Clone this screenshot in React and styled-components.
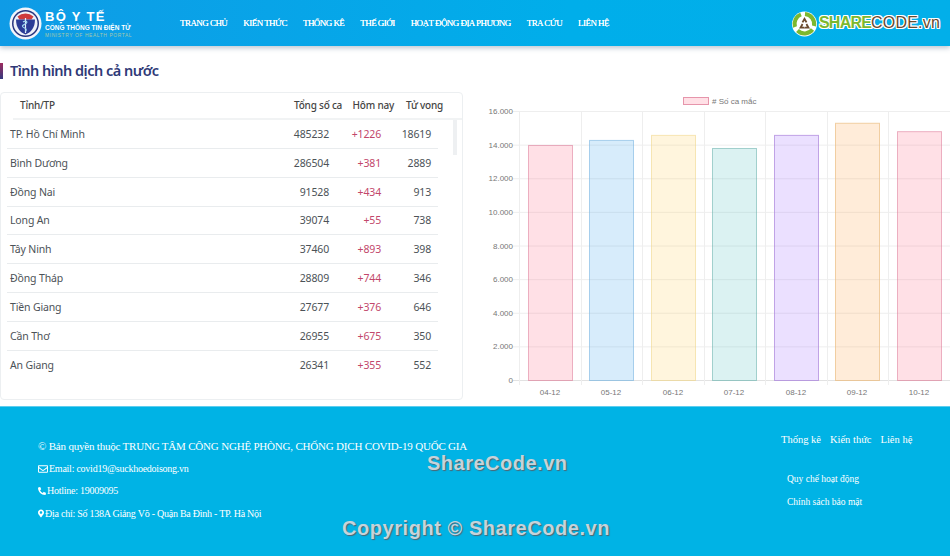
import styled, { createGlobalStyle } from 'styled-components'
import { FaRegEnvelope, FaPhoneAlt, FaMapMarkerAlt } from 'react-icons/fa'

const GlobalStyle = createGlobalStyle`
  html, body {
    margin: 0;
    padding: 0;
    background: #fff;
  }
  #root {
    width: 950px;
    height: 556px;
    overflow: hidden;
  }
`

const Page = styled.div`
  display: flex;
  flex-direction: column;
  width: 950px;
  height: 556px;
  font-family: "Noto Sans", sans-serif;
`

const Header = styled.header`
  display: flex;
  align-items: center;
  flex: 0 0 46px;
  background: linear-gradient(90deg, #0f9be6, #00aeea 60%, #02afe9);
  box-shadow: 0 2px 5px rgba(60, 90, 120, .35);
  position: relative;
  z-index: 1;
`

const Brand = styled.div`
  display: flex;
  align-items: center;
  gap: 3px;
  width: 180px;
  padding-left: 9px;
  box-sizing: border-box;
`

const BrandText = styled.div`
  display: flex;
  flex-direction: column;
  margin-top: 1px;
  font-family: "Liberation Sans", sans-serif;
  font-weight: 700;
  color: #fff;
`

const BrandTitle = styled.span`
  font-size: 13px;
  line-height: 15px;
  letter-spacing: 1.3px;
`

const BrandSub = styled.span`
  font-size: 6.5px;
  line-height: 8px;
  white-space: nowrap;
`

const BrandEn = styled.span`
  font-size: 4.9px;
  line-height: 7px;
  font-weight: 400;
  letter-spacing: .6px;
  color: #a7c9a8;
  white-space: nowrap;
`

const Nav = styled.nav`
  display: flex;
  gap: 16px;
  font-family: "Liberation Serif", serif;
  font-size: 9px;
  color: #fff;
`

const NavLink = styled.a`
  white-space: nowrap;
  letter-spacing: -.55px;
  text-shadow: 0 0 .6px #fff;
`

const ShareLogo = styled.div`
  display: flex;
  align-items: center;
  gap: 0;
  margin-left: auto;
  margin-right: 10px;
  font-family: "Liberation Sans", sans-serif;
  font-size: 16px;
  text-shadow: -1px 0 #fff, 1px 0 #fff, 0 -1px #fff, 0 1px #fff, 1px 1px #fff, -1px -1px #fff, 1px -1px #fff, -1px 1px #fff;
`

const ShareWord = styled.span`
  color: #7cb82f;
  font-weight: 700;
  letter-spacing: -.8px;
`

const CodeWord = styled.span`
  color: #6b4a2e;
  letter-spacing: .2px;
`

const Main = styled.main`
  flex: 1;
  display: flex;
  flex-direction: column;
  min-height: 0;
`

const Title = styled.h2`
  margin: 17px 0 13px;
  padding-left: 7px;
  height: 16px;
  border-left: 3px solid;
  border-image: linear-gradient(#a52a5c, #2d3a80) 1;
  font-size: 14.5px;
  line-height: 15px;
  font-weight: 600;
  letter-spacing: -.52px;
  color: #2f3a78;
`

const Columns = styled.div`
  display: flex;
`

const TableCard = styled.section`
  width: 463px;
  height: 308px;
  flex: none;
  box-sizing: border-box;
  border: 1px solid #eceff1;
  border-radius: 4px;
  position: relative;
`

const HeadRow = styled.div`
  display: flex;
  align-items: center;
  height: 24px;
  padding: 0 11px 1px 7px;
  margin-left: 12px;
  border-bottom: 2px solid #f1f3f4;
  font-size: 10px;
  font-weight: 500;
  letter-spacing: -.22px;
  color: #444;
`

const HeadCell = styled.div`
  width: ${props => props.$w}px;
  text-align: ${props => props.$left ? 'left' : 'right'};
  white-space: nowrap;
`

const Row = styled.div`
  display: flex;
  align-items: center;
  height: 28.85px;
  box-sizing: border-box;
  margin-left: 6px;
  width: 431px;
  padding-left: 3px;
  border-bottom: ${props => props.$last ? 'none' : '1px solid #e9ecee'};
  font-size: 10.5px;
  letter-spacing: -.15px;
  color: #4c5257;
`

const Province = styled.div`
  flex: 1;
  white-space: nowrap;
`

const Num = styled.div`
  width: ${props => props.$w}px;
  text-align: right;
  color: ${props => props.$red ? '#c2476b' : 'inherit'};
`

const ScrollThumb = styled.div`
  position: absolute;
  right: 5px;
  top: 27px;
  width: 4px;
  height: 35px;
  background: #eef0f2;
`

const ChartWrap = styled.section`
  margin-left: 7px;
  width: 480px;
  height: 308px;
  flex: none;
`

const Footer = styled.footer`
  position: relative;
  flex: 0 0 150px;
  box-sizing: border-box;
  display: flex;
  justify-content: space-between;
  padding: 27px 0 0 38px;
  background: #00b3e5;
  border-top: 1px solid #5fcdee;
  font-family: "Liberation Serif", serif;
  font-size: 11px;
  color: #fff;
`

const FooterLeft = styled.div`
  display: flex;
  flex-direction: column;
  gap: 9.2px;
  margin-top: 6px;
`

const FooterCopy = styled.div`
  height: 13px;
  letter-spacing: -.2px;
  white-space: nowrap;
`

const FooterLine = styled.div`
  display: flex;
  align-items: center;
  gap: 1px;
  height: 13px;
  font-size: 10px;
  letter-spacing: -.25px;
  white-space: nowrap;
`

const MarkerIcon = styled(FaMapMarkerAlt)`
  width: 6px;
  height: 9px;
`

const FooterRight = styled.div`
  width: 169px;
  flex: none;
`

const FooterNav = styled.div`
  display: flex;
  gap: 9px;
  font-size: 10.5px;
`

const FooterLinks = styled.div`
  display: flex;
  flex-direction: column;
  gap: 13px;
  margin: 29px 0 0 6px;
  font-size: 9.5px;
`

const Watermark = styled.div`
  position: absolute;
  left: ${props => props.$x}px;
  top: ${props => props.$y}px;
  font-family: "Liberation Sans", sans-serif;
  font-weight: 700;
  font-size: ${props => props.$size}px;
  color: #c6d3da;
  letter-spacing: ${props => props.$spacing}px;
  text-shadow: 1px 1px 1px #4f6572;
  white-space: nowrap;
`

const rows = [
  ['TP. Hồ Chí Minh', 485232, 1226, 18619],
  ['Bình Dương', 286504, 381, 2889],
  ['Đồng Nai', 91528, 434, 913],
  ['Long An', 39074, 55, 738],
  ['Tây Ninh', 37460, 893, 398],
  ['Đồng Tháp', 28809, 744, 346],
  ['Tiền Giang', 27677, 376, 646],
  ['Cần Thơ', 26955, 675, 350],
  ['An Giang', 26341, 355, 552],
]

const bars = [
  { label: '04-12', value: 13980, x: 58, fill: 'rgba(255,99,132,.2)', stroke: 'rgba(220,120,150,.55)' },
  { label: '05-12', value: 14280, x: 119, fill: 'rgba(54,162,235,.2)', stroke: 'rgba(120,180,225,.6)' },
  { label: '06-12', value: 14580, x: 181, fill: 'rgba(255,206,86,.2)', stroke: 'rgba(240,215,140,.6)' },
  { label: '07-12', value: 13800, x: 242, fill: 'rgba(75,192,192,.2)', stroke: 'rgba(110,180,175,.6)' },
  { label: '08-12', value: 14580, x: 304, fill: 'rgba(153,102,255,.2)', stroke: 'rgba(170,130,220,.7)' },
  { label: '09-12', value: 15300, x: 365, fill: 'rgba(255,159,64,.2)', stroke: 'rgba(235,190,130,.7)' },
  { label: '10-12', value: 14800, x: 427, fill: 'rgba(255,99,132,.2)', stroke: 'rgba(220,120,150,.55)' },
]

const CHART_TOP = 19
const CHART_BOTTOM = 288
const yFor = v => CHART_BOTTOM - (v / 16000) * (CHART_BOTTOM - CHART_TOP)
const gridX = [49, 111, 172, 234, 295, 357, 418, 480]
const ticks = [0, 2000, 4000, 6000, 8000, 10000, 12000, 14000, 16000]
const fmt = n => n.toLocaleString('de-DE')

const BarChart = () => (
  <svg width="480" height="308" fontFamily="Liberation Sans, sans-serif" fontSize="8" fill="#777">
    <rect x="213.5" y="5.5" width="25" height="7" fill="rgba(255,99,132,.2)" stroke="rgba(220,110,140,.7)" />
    <text x="242" y="12">#  Số ca mắc</text>
    {ticks.map(t => (
      <g key={t}>
        <line x1="43" x2="480" y1={yFor(t) + .5} y2={yFor(t) + .5} stroke={t === 0 ? '#e2e2e2' : '#eeeeee'} />
        <text x="43" y={yFor(t) + 3} textAnchor="end">{fmt(t)}</text>
      </g>
    ))}
    {gridX.map(x => (
      <line key={x} x1={x + .5} x2={x + .5} y1={CHART_TOP} y2={CHART_BOTTOM + 5} stroke="#eeeeee" />
    ))}
    {bars.map(b => (
      <g key={b.label}>
        <rect x={b.x + .5} y={yFor(b.value) + .5} width="44" height={CHART_BOTTOM - yFor(b.value)} fill={b.fill} stroke={b.stroke} />
        <text x={b.x + 22} y="303" textAnchor="middle">{b.label}</text>
      </g>
    ))}
  </svg>
)

const MinistryLogo = () => (
  <svg width="33" height="33" viewBox="0 0 33 33">
    <circle cx="16.5" cy="16.5" r="16" fill="#f2f5fb" />
    <circle cx="16.5" cy="16.5" r="13.5" fill="#27357f" />
    <circle cx="16.5" cy="16.5" r="12" fill="#eef1f8" />
    <path d="M8.500 9.500a12 12 0 0 1 16 0l-2 3h-12z" fill="#cf3a3c" />
    <path d="M7 12.500h19c0 8-4 13-9.500 15C11 25.500 7 20.500 7 12.500z" fill="#2a3c96" />
    <path d="M16.500 11v15" stroke="#e9edf8" strokeWidth="1.200" />
    <path d="M14 15c3-2 5.500 0 2.500 1.800s-4.500 2.200-1.300 4c2.500 1.400 2.500 2.200 1.300 3.500" fill="none" stroke="#9fd6f0" strokeWidth="1.200" />
  </svg>
)

const RecycleLogo = () => (
  <svg width="29" height="27" viewBox="0 0 29 27">
    <circle cx="14.500" cy="14" r="12.500" fill="#fff" />
    <g fill="none" stroke="#7cb82f" strokeWidth="4">
      <path d="M5 17a10 10 0 0 1 6-12.500" />
      <path d="M15 4a10 10 0 0 1 9 12" />
      <path d="M22.500 19.500a10 10 0 0 1-15 1" />
    </g>
    <path d="M14.500 7l2.800 5-1.600.8-1.200-2-1.200 2-1.600-.8zM9 18.500l2.800-5 1.500 1-1.100 2.200h2.300l.4 1.800zM20 18.500l-2.800-5-1.500 1 1.100 2.200h-1.600l-.4 1.800z" fill="#6b4a2e" />
  </svg>
)

const App = () => (
  <>
    <GlobalStyle />
    <Page>
      <Header>
        <Brand>
          <MinistryLogo />
          <BrandText>
            <BrandTitle>BỘ Y TẾ</BrandTitle>
            <BrandSub>CỔNG THÔNG TIN ĐIỆN TỬ</BrandSub>
            <BrandEn>MINISTRY OF HEALTH PORTAL</BrandEn>
          </BrandText>
        </Brand>
        <Nav>
          {['TRANG CHỦ', 'KIẾN THỨC', 'THỐNG KÊ', 'THẾ GIỚI', 'HOẠT ĐỘNG ĐỊA PHƯƠNG', 'TRA CỨU', 'LIÊN HỆ'].map(item => (
            <NavLink key={item}>{item}</NavLink>
          ))}
        </Nav>
        <ShareLogo>
          <RecycleLogo />
          <span><ShareWord>SHARE</ShareWord><CodeWord>CODE.vn</CodeWord></span>
        </ShareLogo>
      </Header>
      <Main>
        <Title>Tình hình dịch cả nước</Title>
        <Columns>
          <TableCard>
            <HeadRow>
              <HeadCell $left $w={274}>Tỉnh/TP</HeadCell>
              <HeadCell $w={47}>Tổng số ca</HeadCell>
              <HeadCell $w={53}>Hôm nay</HeadCell>
              <HeadCell $w={49}>Tử vong</HeadCell>
            </HeadRow>
            {rows.map(([name, total, today, deaths], i) => (
              <Row key={name} $last={i === rows.length - 1}>
                <Province>{name}</Province>
                <Num $w={50}>{total}</Num>
                <Num $w={52} $red>+{today}</Num>
                <Num $w={50}>{deaths}</Num>
                <Num $w={7} />
              </Row>
            ))}
            <ScrollThumb />
          </TableCard>
          <ChartWrap>
            <BarChart />
          </ChartWrap>
        </Columns>
      </Main>
      <Footer>
        <FooterLeft>
          <FooterCopy>© Bản quyền thuộc TRUNG TÂM CÔNG NGHỆ PHÒNG, CHỐNG DỊCH COVID-19 QUỐC GIA</FooterCopy>
          <FooterLine><FaRegEnvelope size={10} /> Email: covid19@suckhoedoisong.vn</FooterLine>
          <FooterLine><FaPhoneAlt size={8} /> Hotline: 19009095</FooterLine>
          <FooterLine><MarkerIcon /> Địa chỉ: Số 138A Giảng Võ - Quận Ba Đình - TP. Hà Nội</FooterLine>
        </FooterLeft>
        <FooterRight>
          <FooterNav>
            <span>Thống kê</span>
            <span>Kiến thức</span>
            <span>Liên hệ</span>
          </FooterNav>
          <FooterLinks>
            <span>Quy chế hoạt động</span>
            <span>Chính sách bảo mật</span>
          </FooterLinks>
        </FooterRight>
        <Watermark $x={427} $y={45} $size={20} $spacing={.5}>ShareCode.vn</Watermark>
        <Watermark $x={342} $y={110} $size={20} $spacing={.55}>Copyright © ShareCode.vn</Watermark>
      </Footer>
    </Page>
  </>
)

export default App
